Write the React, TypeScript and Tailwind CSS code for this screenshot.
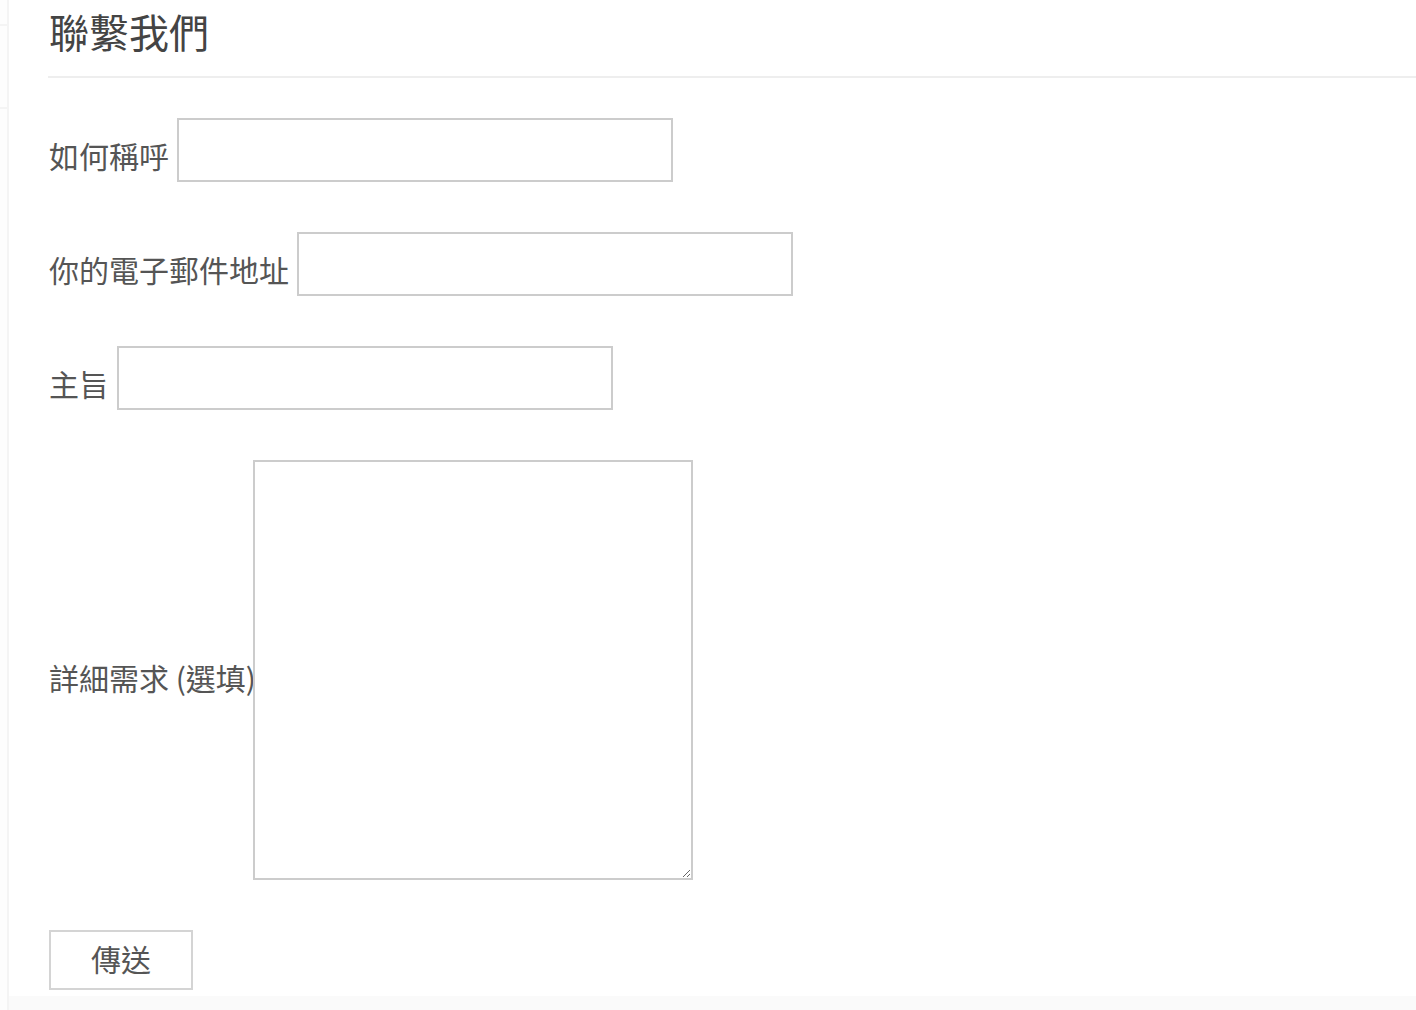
import React from "react";

const font = { fontFamily: '"Noto Sans CJK TC", "Noto Sans", sans-serif' };

export default function App() {
  return (
    <div className="flex min-h-[1010px] w-full bg-white text-[#555]" style={font}>
      <aside className="w-[9px] shrink-0 border-r-2 border-[#f4f4f4] bg-[#fdfdfd]">
        <div className="mt-[24px] h-[85px] border-y-2 border-[#f4f4f4]" />
      </aside>
      <div className="flex flex-1 flex-col">
        <main className="flex-1 pl-[39px]">
          <h1 className="pt-[7px] pl-[1px] text-[40px] leading-[48px] font-normal text-[#444]">聯繫我們</h1>
          <div className="mt-[21px] h-[2px] bg-[#eeeeee]" />
          <form className="flex flex-col gap-[50px] pt-[40px] pl-[1px]">
            <div className="flex items-center">
              <label className="w-[128px] shrink-0 whitespace-nowrap pt-[10px] text-[30px] leading-[40px]">如何稱呼</label>
              <input className="h-[64px] w-[496px] border-2 border-[#cccccc] bg-white" />
            </div>
            <div className="flex items-center">
              <label className="w-[248px] shrink-0 whitespace-nowrap pt-[10px] text-[30px] leading-[40px]">你的電子郵件地址</label>
              <input className="h-[64px] w-[496px] border-2 border-[#cccccc] bg-white" />
            </div>
            <div className="flex items-center">
              <label className="w-[68px] shrink-0 whitespace-nowrap pt-[10px] text-[30px] leading-[40px]">主旨</label>
              <input className="h-[64px] w-[496px] border-2 border-[#cccccc] bg-white" />
            </div>
            <div className="flex items-center">
              <label className="w-[204px] shrink-0 whitespace-nowrap pt-[13px] text-[30px] leading-[40px]">詳細需求 (選填)</label>
              <textarea className="h-[420px] w-[440px] border-2 border-[#cccccc] bg-white" />
            </div>
            <div>
              <button type="button" className="h-[60px] w-[144px] border-2 border-[#d4d4d4] bg-white pb-[4px] text-[30px] leading-[40px] text-[#555]">傳送</button>
            </div>
          </form>
        </main>
        <div className="mt-[6px] h-[14px] bg-[#fafafa]" />
      </div>
    </div>
  );
}
